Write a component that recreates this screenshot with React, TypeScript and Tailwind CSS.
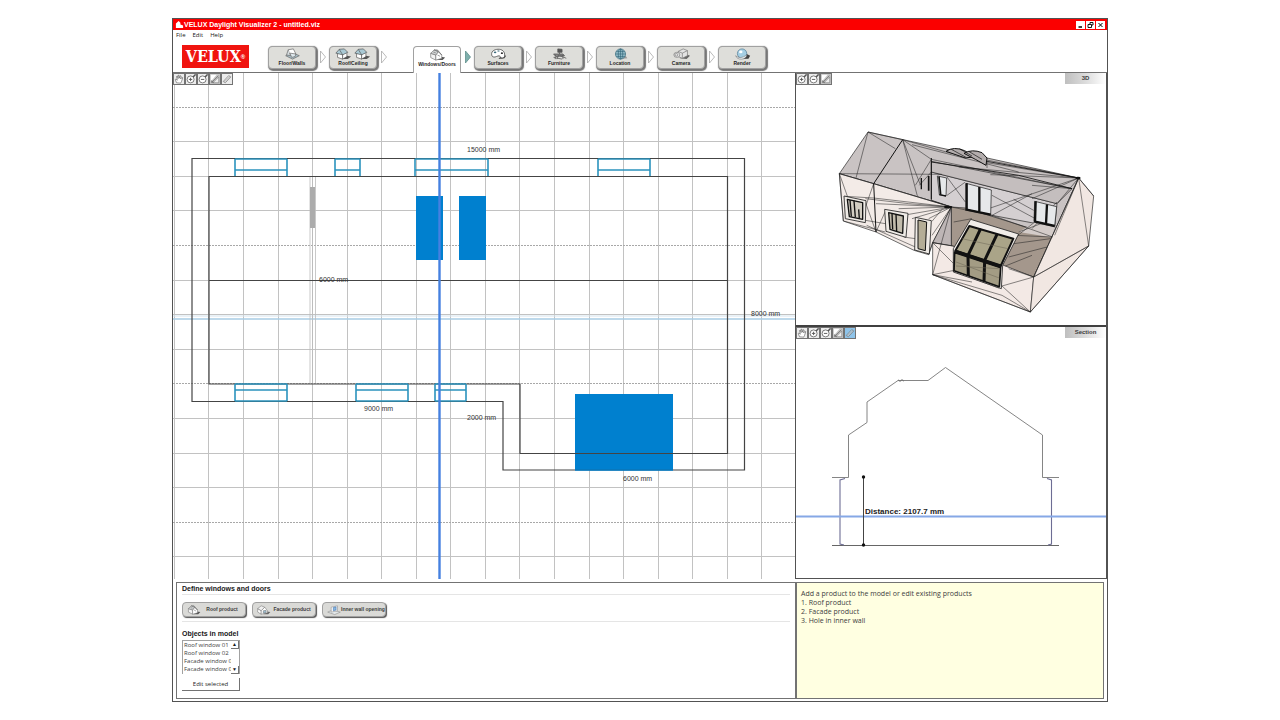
import React, { useState } from 'react';

type IconProps = { className?: string };

const HouseIcon: React.FC<IconProps> = ({ className }) => (
  <svg viewBox="0 0 20 14" className={className} fill="#f3f3f3" stroke="#777" strokeWidth="0.8" strokeLinejoin="round">
    <path d="M9 13 L16 13 L19 10 L14 9 Z" fill="#555" stroke="none" />
    <path d="M2 5 L8 7 V13 L2 10 Z" />
    <path d="M8 7 L11 3 L15 7 V11 L8 13 Z" fill="#fff" />
    <path d="M2 5 L6 1 L11 3 L8 7 Z" fill="#d0d3d4" />
    <path d="M6 1 L10 1 L15 7 L11 3 Z" fill="#9da1a3" />
    <path d="M5 3.500 L8 4.500 M10 7 L13 8.500" />
  </svg>
);

const FacadeIcon: React.FC<IconProps> = ({ className }) => (
  <svg viewBox="0 0 20 14" className={className} fill="#fff" stroke="#777" strokeWidth="0.8" strokeLinejoin="round">
    <path d="M9 13 L16 13 L19 10 L14 9 Z" fill="#666" stroke="none" />
    <path d="M1 5 L6 8 V13 L1 10 Z" />
    <path d="M6 8 L11 3 L15 8 V11 L6 13 Z" />
    <path d="M1 5 L6 1 L11 3 L6 8 Z" fill="#f0f0f0" />
    <path d="M9 8 L13 7.500 V10.500 L9 11.500 Z" fill="#9cc0d4" />
  </svg>
);

const FloorIcon: React.FC<IconProps> = ({ className }) => (
  <svg viewBox="0 0 20 14" className={className} fill="#fff" stroke="#666" strokeWidth="0.8" strokeLinejoin="round">
    <path d="M2 9 L9 5 L18 9 L10 13 Z" fill="#a9bfc8" />
    <path d="M5 2 L11 1 L14 7 L7 9 Z" />
    <path d="M5 2 L3 8 L7 9" fill="#d5dde0" />
    <path d="M7 6 L14 7 L13 10 L9 11 Z" fill="#dfe9ee" />
  </svg>
);

const RoofIcon: React.FC<IconProps> = ({ className }) => (
  <svg viewBox="0 0 20 14" className={className} fill="#fff" stroke="#555" strokeWidth="0.8" strokeLinejoin="round">
    <path d="M9 13 L15 13 L19 10 L14 9 Z" fill="#555" stroke="none" />
    <path d="M3 6 L9 7 V13 L3 11 Z" />
    <path d="M9 7 L14 5 V10 L9 13 Z" />
    <path d="M1 6 L5 1.5 L11 1 L15 5 L9 8 Z" fill="#a9c9d4" />
    <path d="M5 1.5 L9 8" />
  </svg>
);

const PaletteIcon: React.FC<IconProps> = ({ className }) => (
  <svg viewBox="0 0 20 14" className={className}>
    <path d="M10 13 L17 12 L19 9 L14 8 Z" fill="#444" />
    <path d="M2 8 C1 3 7 1 11 1.5 C16 2 18 6 17 10 C16 12.500 12 12 12 10 C11 8 8 10 6 10.500 C4 11 2 10 2 8 Z" fill="#fff" stroke="#444" strokeWidth="0.9" />
    <ellipse cx="6" cy="5" rx="1.5" ry="1" fill="#3f6d7c" />
    <ellipse cx="10" cy="3.500" rx="1.500" ry="0.900" fill="#698b96" />
    <ellipse cx="14" cy="6" rx="1.300" ry="1" fill="#333" />
  </svg>
);

const ChairIcon: React.FC<IconProps> = ({ className }) => (
  <svg viewBox="0 0 20 14" className={className} fill="none" stroke="#555" strokeWidth="0.900">
    <path d="M8 1 L13 1.500 L13 5 L8 5 Z" fill="#555" />
    <path d="M10 5 V7 M3 7 L14 7 L16 9 L6 10 Z" fill="#888" />
    <path d="M5 8 V13 M14 8 V13 M9 8 L7 13 M10 9 L18 12 M3 11 L13 13" />
  </svg>
);

const GlobeIcon: React.FC<IconProps> = ({ className }) => (
  <svg viewBox="0 0 20 14" className={className} fill="none" stroke="#2f6376" strokeWidth="0.7">
    <path d="M10 13 L18 12 L16 9 Z" fill="#999" stroke="none" />
    <circle cx="10" cy="7" r="6" fill="#8fb9c6" />
    <ellipse cx="10" cy="7" rx="2.600" ry="6" />
    <path d="M4 7 H16 M5 4 H15 M5 10 H15 M10 1 V13" />
  </svg>
);

const CameraIcon: React.FC<IconProps> = ({ className }) => (
  <svg viewBox="0 0 20 14" className={className} fill="#e3e3e3" stroke="#777" strokeWidth="0.8" strokeLinejoin="round">
    <path d="M8 12 L16 13 L20 9 L15 7 Z" fill="#666" stroke="none" />
    <path d="M6 4 L12 1 L17 3 V9 L11 12 L6 10 Z" />
    <path d="M6 4 L11 6 V12 M11 6 L17 3" />
    <ellipse cx="4.500" cy="8" rx="3.500" ry="3" fill="#f2f2f2" />
    <ellipse cx="4" cy="8" rx="1.800" ry="1.600" />
  </svg>
);

const RenderIcon: React.FC<IconProps> = ({ className }) => (
  <svg viewBox="0 0 20 14" className={className}>
    <path d="M7 13 L17 12.500 L19 9 L15 7 Z" fill="#444" />
    <circle cx="9.500" cy="6.500" r="5.500" fill="#a5cfe4" stroke="#4c7890" strokeWidth="0.800" />
    <path d="M2 9 C5 12 10 12 15 8 C15 11 12 13 9 13 C5 13 3 12 2 9 Z" fill="#eef5f8" stroke="#666" strokeWidth="0.600" />
    <ellipse cx="8" cy="4.500" rx="2" ry="1.500" fill="#fff" />
  </svg>
);

const OpeningIcon: React.FC<IconProps> = ({ className }) => (
  <svg viewBox="0 0 20 14" className={className} fill="#fff" stroke="#888" strokeWidth="0.8" strokeLinejoin="round">
    <path d="M1 10 L8 7 L19 10 L11 13.500 Z" fill="#e4e8ea" />
    <path d="M6 3 L15 1 V8 L6 10 Z" />
    <path d="M9 3.500 L13 2.500 V7 L9 8 Z" fill="#8ab8e0" stroke="#3b6fb0" />
  </svg>
);

type Tool = 'pan' | 'zoomIn' | 'zoomOut' | 'fit' | 'measure';

const toolLabels: Record<Tool, string> = {
  pan: 'Pan',
  zoomIn: 'Zoom in',
  zoomOut: 'Zoom out',
  fit: 'Fit to view',
  measure: 'Measure',
};

const ToolIcon: React.FC<{ tool: Tool }> = ({ tool }) => (
  <svg viewBox="0 0 12 12" className="w-full h-full" fill="none" stroke="#555" strokeWidth="0.9">
    {tool === 'pan' && (
      <path d="M3 10.500 L1.500 6.500 L2.500 6 L4 7.500 L3 3 L4 2.500 L5 5.500 L5 1.500 L6 1.500 L6.500 5 L7.500 2 L8.500 2.500 L8 6 L9.500 4 L10.500 4.500 L9 9 L8 11 Z" fill="#fff" strokeWidth="0.700" />
    )}
    {(tool === 'zoomIn' || tool === 'zoomOut') && (
      <>
        <circle cx="5.500" cy="6.500" r="4.200" fill="#fff" />
        <path d="M8.500 3.500 L11.500 0.500" strokeWidth="1.800" />
        <path d="M3.500 6.500 H7.500" strokeWidth="1.100" />
      </>
    )}
    {tool === 'zoomIn' && <path d="M5.500 4.500 V8.500" strokeWidth="1.100" />}
    {tool === 'fit' && (
      <>
        <path d="M1 1 H8 L1 9 Z" fill="#fff" stroke="none" />
        <path d="M10.500 3.500 V10.500 H3.500 Z" fill="#eee" stroke="#777" strokeWidth="0.700" />
        <path d="M2 10 L10 2 M2 7.500 V10 H4.500" strokeWidth="0.700" />
      </>
    )}
    {tool === 'measure' && (
      <>
        <path d="M1.500 9 L8 2 L10.500 3.500 L4 10.500 Z" fill="#fff" fillOpacity="0.4" stroke="#777" />
        <path d="M3 9.500 L9.500 3" stroke="#999" />
      </>
    )}
  </svg>
);

const ViewTools: React.FC<{ tools: Tool[]; active?: Tool }> = ({ tools, active }) => (
  <div className="absolute top-0 left-0 flex bg-white">
    {tools.map((tool) => (
      <button
        key={tool}
        aria-label={toolLabels[tool]}
        className={`w-3 h-3 border border-neutral-500 ${
          tool === active ? 'bg-[#8fc4ea]' : tool === 'fit' ? 'bg-[#c4c4c4]' : 'bg-[#ececec]'
        }`}
      >
        <ToolIcon tool={tool} />
      </button>
    ))}
  </div>
);

const ViewTitle: React.FC<{ children: React.ReactNode }> = ({ children }) => (
  <h2 className="absolute top-0 right-0 w-[41px] h-[11px] bg-linear-to-r from-[#bfbfbf] via-[#dcdcdc] to-white text-center text-[6px] leading-[11px] font-bold text-neutral-700">
    {children}
  </h2>
);

const steps = [
  { name: 'Floor/Walls', icons: [FloorIcon] },
  { name: 'Roof/Ceiling', icons: [RoofIcon, RoofIcon] },
  { name: 'Windows/Doors', icons: [HouseIcon] },
  { name: 'Surfaces', icons: [PaletteIcon] },
  { name: 'Furniture', icons: [ChairIcon] },
  { name: 'Location', icons: [GlobeIcon] },
  { name: 'Camera', icons: [CameraIcon] },
  { name: 'Render', icons: [RenderIcon] },
];

const StepArrow: React.FC<{ active: boolean }> = ({ active }) => (
  <svg viewBox="0 0 13 14" className="w-[13px] h-3.5 shrink-0 mb-2">
    <path d="M4.500 1 L9.500 7 L4.500 13 Z" fill={active ? '#7fb0ad' : '#fff'} stroke={active ? '#5f8f8c' : '#aaa'} strokeWidth="0.800" />
  </svg>
);

const Toolbar: React.FC<{ step: string; onStep: (name: string) => void }> = ({ step, onStep }) => (
  <nav className="flex items-end h-8 border-b border-neutral-500 pl-[9px]">
    <div className="w-[67px] h-[23px] mb-1 mr-[19px] bg-[#f0140f] text-white flex items-center justify-center">
      <span className="text-[16px] leading-none font-bold font-['DejaVu_Serif_Condensed','DejaVu_Serif',serif]">VELUX</span>
      <span className="text-[6px] leading-none font-bold">®</span>
    </div>
    {steps.map(({ name, icons }, i) => {
      const active = name === step;
      return (
        <React.Fragment key={name}>
          <button
            onClick={() => onStep(name)}
            className={`w-12 shrink-0 flex flex-col items-center ${
              active
                ? 'h-[27px] -mb-px pt-0.5 bg-white border border-b-0 border-neutral-400 rounded-t-sm'
                : 'h-[23px] mb-[3px] pt-px bg-[#dededa] border border-neutral-400 rounded-sm shadow-[1px_1px_1px_1px_#777]'
            }`}
          >
            <span className="flex gap-0.5">
              {icons.map((Icon, n) => (
                <Icon key={n} className="w-[17px] h-3" />
              ))}
            </span>
            <span className="text-[5px] leading-[7px] font-bold text-neutral-800">{name}</span>
          </button>
          {i < steps.length - 1 && <StepArrow active={active} />}
          {i === 1 && <div className="w-[23px]" />}
        </React.Fragment>
      );
    })}
  </nav>
);

const gridColumns = Array.from({ length: 18 }, (_, i) => 174.4 + i * 34.55);
const gridRows = Array.from({ length: 14 }, (_, i) => 107 + i * 34.6);

const planWindows = [
  { x: 235, y: 159, w: 52, sash: 170 },
  { x: 335, y: 159, w: 25, sash: 170 },
  { x: 415, y: 159, w: 73, sash: 170 },
  { x: 598, y: 159, w: 52, sash: 170 },
  { x: 235, y: 384, w: 52, sash: 390 },
  { x: 356, y: 384, w: 52, sash: 390 },
  { x: 435, y: 384, w: 31, sash: 390 },
];

const planLabels = [
  { x: 467, y: 152, text: '15000 mm' },
  { x: 319, y: 282, text: '6000 mm' },
  { x: 751, y: 316, text: '8000 mm' },
  { x: 364, y: 411, text: '9000 mm' },
  { x: 467, y: 420, text: '2000 mm' },
  { x: 623, y: 481, text: '6000 mm' },
];

const FloorPlan: React.FC = () => (
  <section className="relative flex-1 min-w-0">
    <svg viewBox="173 73 622 506" className="block w-full h-auto">
      <g stroke="#c2c2c2" strokeWidth="1" shapeRendering="crispEdges">
        {gridColumns.map((x) => (
          <path key={x} d={`M${x} 73 V579`} />
        ))}
        {gridRows.map((y, i) => (
          <path key={y} d={`M173 ${y} H795`} strokeDasharray={i % 4 === 0 ? '2 1' : undefined} stroke={i % 4 === 0 ? '#a8a8a8' : undefined} />
        ))}
      </g>
      <path d="M173 319 H795" stroke="#a8cde4" strokeWidth="1.500" />
      <path d="M173 316 H795" stroke="#d5e4ef" />

      <path d="M310 176 V384 M315.500 176 V384 M312.500 176 V384" stroke="#bbb" strokeWidth="0.800" />
      <rect x="310" y="187" width="5" height="41" fill="#acacac" />

      <rect x="416" y="196" width="27" height="64" fill="#0080cf" />
      <rect x="459" y="196" width="27" height="64" fill="#0080cf" />
      <rect x="575" y="394" width="98" height="76" fill="#0080cf" />

      <g fill="none" stroke="#444" strokeWidth="1.200">
        <path d="M192 158.500 H744.500 V470 H503 V401.500 H192 Z" />
        <path d="M209 176.500 H727.500 V453.500 H520 V384 H209 Z" />
        <path d="M209 280.500 H727.500" />
      </g>
      <path d="M575 470 H673" stroke="#0080cf" strokeWidth="1.500" />

      {planWindows.map(({ x, y, w, sash }) => (
        <g key={`${x}-${y}`} fill="none" stroke="#2b93bd">
          <path d={`M${x} ${y} H${x + w} M${x} ${sash} H${x + w}`} strokeWidth="1.600" />
          <path d={`M${x} ${y} V${y + 17} M${x + w} ${y} V${y + 17}`} strokeWidth="1.600" />
          {y > 300 && <path d={`M${x} ${y + 17} H${x + w}`} strokeWidth="1.500" />}
        </g>
      ))}

      <path d="M439.500 73 V579" stroke="#4580e0" strokeWidth="2.400" />

      <g fontSize="7" fill="#333" fontFamily="Liberation Sans, sans-serif">
        {planLabels.map(({ x, y, text }) => (
          <text key={`${x}-${y}`} x={x} y={y}>{text}</text>
        ))}
      </g>
    </svg>
    <ViewTools tools={['pan', 'zoomIn', 'zoomOut', 'fit', 'measure']} />
  </section>
);

const ModelView: React.FC = () => (
  <section className="relative">
    <svg viewBox="-108 -147 930 756" className="block w-full h-auto" strokeLinejoin="round">
      <g stroke="#222" strokeWidth="2">
        {/* roof and back walls */}
        <path d="M22 155 L108 30 L740 168 L605 465 L302 362 L358 255 L125 185 Z" fill="#c9c3c3" />
        <path d="M298 150 L675 245 L668 315 L480 280 L358 255 L298 235 Z" fill="#d4cfd1" />
        <path d="M298 118 L720 200 L675 245 L298 150 Z" fill="#c4bebe" />

        {/* terrace floor */}
        <path d="M358 255 L400 258 L662 340 L605 465 L520 435 L358 380 Z" fill="#a4978c" />
        <path d="M560 330 L606 302 L668 315 L658 346 Z" fill="#d4ccc9" stroke="none" />

        {/* front walls */}
        <path d="M22 155 L125 185 L358 255 L302 362 L290 398 L246 385 L132 330 L34 297 Z" fill="#f3ebe7" />
        <path d="M358 255 V372 L302 362 Z" fill="#bdb5b5" />
        <path d="M302 362 L362 372 L520 432 L605 465 L595 570 L302 458 Z" fill="#f3e9e5" />
        <path d="M740 168 L785 222 L770 372 L595 570 L605 465 Z" fill="#f1e7e2" />
      </g>

      {/* mesh edges */}
      <g fill="none" stroke="#222" strokeWidth="1.600">
        <path d="M108 30 L72 168 M108 30 L190 80 M108 30 L212 53 M22 155 L330 157 M22 155 L34 297 M22 155 L48 228" />
        <path d="M212 53 L256 222 M212 53 L265 188 M212 53 L350 92 L740 168" />
        <path d="M212 53 L298 112 L720 200 M240 68 L560 150" />
        <path d="M298 112 L250 190 M262 190 L298 150 M740 168 L465 122 L465 138 M740 168 L380 135 M740 168 L475 158" />
        <path d="M740 168 L600 230 M740 168 L675 245 M720 200 L600 190 M740 168 L440 270" />
        <path d="M345 220 L400 180 M345 165 L400 240 M480 220 L610 290 M480 280 L600 215 M545 232 L605 265 M675 240 L600 320 M298 235 L358 255" />
        <path d="M22 155 L125 185 L358 255 M40 223 L125 228 L358 255 M125 185 L102 250 M100 240 L132 330 M100 230 L230 245 L358 255" />
        <path d="M132 245 L358 255 L200 260 M358 255 L225 278 M358 255 L240 290 M358 255 L290 290 M358 255 L300 340 M300 298 L330 262" />
        <path d="M34 297 L160 330 M100 295 L160 305 M104 310 L250 375 M132 330 L160 268 M215 345 L250 350 M290 398 L302 362" />
        <path d="M302 458 L358 255 M302 362 L365 425 M302 362 L365 372 M302 458 L362 446 L500 498 M302 458 L510 520 L595 570 L302 458" />
        <path d="M510 492 L605 465 L530 440 M510 492 L595 570 M605 465 L770 372 L595 570 M302 458 L420 480" />
        <path d="M740 168 L770 372 L605 465 M740 168 L668 340 M785 222 L740 168 L605 465" />
        <path d="M358 255 L480 280 L662 345 M365 300 L420 290 M548 340 L660 345 M545 365 L655 350 M530 405 L645 375 M560 330 L640 300 M545 350 L606 302 M520 432 L600 400" />
      </g>
      <g fill="none" stroke="#111" strokeWidth="3">
        <path d="M212 53 L125 185 L132 330" />
        <path d="M298 108 V232" />
        <path d="M465 118 L740 168 M298 120 L560 160 L720 200" strokeWidth="2.500" />
      </g>
      <ellipse cx="348" cy="255" rx="12" ry="4" fill="#111" />
      <ellipse cx="738" cy="168" rx="8" ry="4" fill="#111" />

      {/* roof windows behind the ridge */}
      <g fill="#b3adad" stroke="#111" strokeWidth="3">
        <path d="M342 88 Q365 72 398 86 L428 104 L400 108 Z" />
        <path d="M396 94 Q420 80 450 92 L465 108 L462 130 L430 112 Z" />
        <path d="M358 82 L402 106 M382 80 L420 102 M410 88 L450 112" strokeWidth="2" />
      </g>

      {/* facade windows */}
      <g fill="#efebe6" stroke="#222" strokeWidth="2.500">
        <path d="M36 222 L102 236 L100 302 L40 290 Z" />
        <path d="M158 262 L228 274 L222 346 L162 328 Z" />
        <path d="M250 286 L298 296 L292 396 L248 384 Z" />
      </g>
      <g fill="#b4ad96" stroke="#111" strokeWidth="4">
        <path d="M46 232 L92 242 L92 292 L52 284 Z" fill="#d2cdc2" />
        <path d="M170 272 L214 282 L212 334 L174 322 Z" fill="#c2bcac" />
        <path d="M258 294 L284 300 L280 386 L258 380 Z" strokeWidth="3" />
        <path d="M66 236 L70 286 M54 234 L58 284 M80 262 L82 290 M192 276 L194 328 M180 274 L182 322" />
      </g>

      {/* windows seen through the open side */}
      <g fill="#e6e8ea" stroke="#111" strokeWidth="7">
        <path d="M402 184 L478 204 L476 278 L402 262 Z" strokeWidth="2" />
        <path d="M404 184 V264 M442 195 V272 M400 262 L476 278" />
        <path d="M608 238 L674 254 L668 312 L606 298 Z" strokeWidth="2" />
        <path d="M611 238 L609 300 M645 247 L642 306 M606 298 L668 312" />
        <path d="M316 162 L344 168 L342 222 L322 218 Z" strokeWidth="2" />
        <path d="M321 164 L326 218 M290 162 V206" strokeWidth="5" />
        <path d="M268 168 V202" strokeWidth="4" />
        <path d="M322 218 L342 222" strokeWidth="4" />
      </g>

      {/* glazed bay */}
      <path d="M416 292 L560 336 L512 430 L508 500 L364 450 V380 Z" fill="#f1ede9" stroke="#222" strokeWidth="2.500" />
      <path d="M412 312 L544 350 L506 432 L370 386 Z" fill="#aaa488" stroke="#111" strokeWidth="6" />
      <path d="M368 390 L506 436 L502 494 L366 446 Z" fill="#a39c84" stroke="#111" strokeWidth="5" />
      <path d="M446 320 L408 400 L409 462 M496 335 L458 415 L456 478" fill="none" stroke="#111" strokeWidth="9" />
      <path d="M368 388 L508 434" stroke="#111" strokeWidth="12" />
      <path d="M372 420 L502 468 M390 350 L528 380 M372 432 L500 440" stroke="#6b6554" strokeWidth="1.500" />
    </svg>
    <ViewTools tools={['zoomIn', 'zoomOut', 'fit']} />
    <ViewTitle>3D</ViewTitle>
  </section>
);

const SectionView: React.FC = () => (
  <section className="relative border-t-2 border-neutral-700">
    <svg viewBox="796 327 310 251" className="block w-full h-auto">
      <g fill="none" stroke="#777" strokeWidth="0.900">
        <path d="M832 477.500 H848.500 V435 L867 422.500 V402 L898 380.500 H928 L945.500 367.500 L1042.500 435 V477.500 H1059" />
        <path d="M832 545.500 H1059" stroke="#555" />
        <path d="M898 380 l2 1 l2 -1 l2 1" strokeWidth="1.200" />
      </g>
      <path d="M845 478.500 L840 480 V544 L844 545 M1047 478.500 L1051.500 480 V544 L1048 545" fill="none" stroke="#6d6d94" strokeWidth="1.100" />
      <path d="M796 516.500 H1106" stroke="#86a8e6" strokeWidth="2.200" />
      <path d="M863.500 477 V545" stroke="#444" />
      <circle cx="863.500" cy="477" r="1.700" fill="#111" />
      <circle cx="863.500" cy="545" r="1.700" fill="#111" />
      <text x="865" y="514" fontSize="8" fontWeight="bold" fill="#222" fontFamily="Liberation Sans, sans-serif">
        Distance: 2107.7 mm
      </text>
    </svg>
    <ViewTools tools={['pan', 'zoomIn', 'zoomOut', 'fit', 'measure']} active="measure" />
    <ViewTitle>Section</ViewTitle>
  </section>
);

const products = [
  { name: 'Roof product', Icon: HouseIcon },
  { name: 'Facade product', Icon: FacadeIcon },
  { name: 'Inner wall opening', Icon: OpeningIcon },
];

const objects = ['Roof window 01', 'Roof window 02', 'Facade window 01', 'Facade window 02', 'Facade window 03'];

const ProductPanel: React.FC = () => (
  <section className="flex-1 min-w-0 border border-r-0 border-neutral-500 px-[5px] pb-[7px]">
    <h2 className="h-3 text-[7px] leading-[11px] font-bold border-b border-neutral-200">Define windows and doors</h2>
    <div className="flex gap-1.5 pt-[7px] pb-1 border-b border-neutral-200">
      {products.map(({ name, Icon }) => (
        <button
          key={name}
          className="w-16 h-[15px] flex items-center justify-between pl-1 pr-0.5 bg-[#dadad7] border border-neutral-400 rounded-sm shadow-[1px_1px_1px_#555] text-[5px] leading-none font-bold text-neutral-700 whitespace-nowrap"
        >
          <Icon className="w-3.5 h-3 shrink-0" />
          <span className="flex-1 text-center">{name}</span>
        </button>
      ))}
    </div>
    <label htmlFor="objects" className="block pt-1.5 text-[7px] leading-[11px] font-bold">Objects in model</label>
    <div className="flex w-[58px] h-[34px] mt-px mb-1 border border-b-0 border-neutral-400">
      <select id="objects" size={5} className="flex-1 min-w-0 h-full overflow-hidden pl-px text-[6px] leading-2 text-neutral-700 outline-none font-['Open_Sans',sans-serif]">
        {objects.map((name) => (
          <option key={name} className="p-0 min-h-0 h-2 leading-2">{name}</option>
        ))}
      </select>
      <div className="w-2 flex flex-col justify-between">
        <button aria-label="Scroll up" className="h-2 border-b border-r border-neutral-500 text-[5px] leading-none">▲</button>
        <button aria-label="Scroll down" className="h-2 border-b border-r border-neutral-500 text-[5px] leading-none">▼</button>
      </div>
    </div>
    <button className="block w-[58px] h-[13px] border-b border-r border-neutral-500 text-[6px] leading-3 text-neutral-800 font-['Open_Sans',sans-serif]">Edit selected</button>
  </section>
);

const HelpPanel: React.FC = () => (
  <aside className="w-[309px] shrink-0 mr-[3px] border border-l-2 border-neutral-500 bg-[#ffffe1] px-1 py-1.5 text-[7px] leading-[9px] text-neutral-700 font-['Open_Sans',sans-serif]">
    <p>Add a product to the model or edit existing products</p>
    <p>1. Roof product</p>
    <p>2. Facade product</p>
    <p>3. Hole in inner wall</p>
  </aside>
);

const App: React.FC = () => {
  const [step, setStep] = useState('Windows/Doors');

  return (
    <div className="min-h-screen bg-white px-[172px] py-[18px] text-neutral-900 font-['Liberation_Sans',sans-serif]">
      <div className="border border-neutral-600 pb-0.5">
        <header className="flex items-center h-[11px] pl-0.5 pr-0.5 bg-[#fb0000] text-white">
          <svg viewBox="0 0 10 10" className="w-[9px] h-[9px]" fill="#fff">
            <path d="M1 9 V4 L4 1 L6 3 V5 L9 6 V9 Z" />
          </svg>
          <h1 className="text-[7px] leading-[11px] font-bold">VELUX Daylight Visualizer 2 - untitled.viz</h1>
          <div className="ml-auto flex gap-px">
            <button aria-label="Minimize" className="w-[9px] h-2 bg-white text-black">
              <svg viewBox="0 0 9 8" stroke="currentColor"><path d="M2.500 6 H6" strokeWidth="1.500" /></svg>
            </button>
            <button aria-label="Restore" className="w-[9px] h-2 bg-white text-black">
              <svg viewBox="0 0 9 8" fill="none" stroke="currentColor" strokeWidth="0.900"><path d="M4 3 V1.500 H7 V4 H5.500 M2 3.500 H5.500 V6.500 H2 Z" /></svg>
            </button>
            <button aria-label="Close" className="w-[9px] h-2 bg-white text-black">
              <svg viewBox="0 0 9 8" stroke="currentColor"><path d="M2.500 2 L6.500 6 M6.500 2 L2.500 6" /></svg>
            </button>
          </div>
        </header>

        <div className="flex gap-[7px] h-[11px] pl-[3px] text-[6px] leading-[11px] font-['Open_Sans',sans-serif]">
          <button>File</button>
          <button>Edit</button>
          <button>Help</button>
        </div>

        <Toolbar step={step} onStep={setStep} />

        <main className="flex">
          <FloorPlan />
          <div className="w-[312px] shrink-0 border-x border-b border-neutral-600">
            <ModelView />
            <SectionView />
          </div>
        </main>

        <footer className="flex pt-[3px] pl-[3px]">
          <ProductPanel />
          <HelpPanel />
        </footer>
      </div>
    </div>
  );
};

export default App;
